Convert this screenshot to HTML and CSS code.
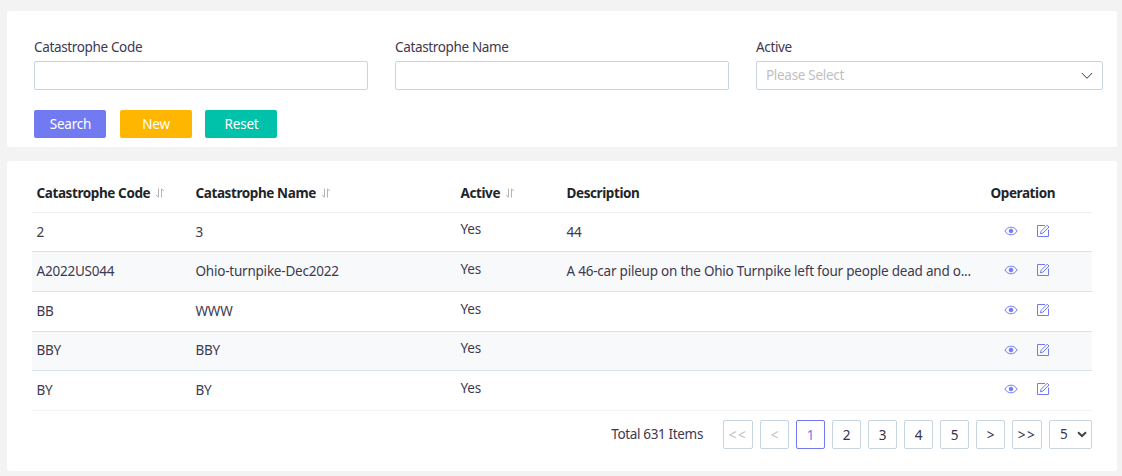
FILE: index.html
```html
<!DOCTYPE html>
<html lang="en">
<head>
    <meta charset="UTF-8">
    <meta name="viewport" content="width=device-width, initial-scale=1.0">
    <title>Catastrophe</title>
    <link rel="stylesheet" href="styles.css">
</head>
<body>
    <svg class="defs" width="0" height="0">
        <symbol id="sort" viewBox="0 0 10 10">
            <path d="M3.5 0.5V9M1 7L3.5 9.2M6.5 9.5V1M9 3L6.5 0.8"/>
        </symbol>
        <symbol id="eye" viewBox="0 0 14 14">
            <path d="M0.9 7C4 1.9 10 1.9 13.1 7C10 12.1 4 12.1 0.9 7Z"/>
            <circle cx="7" cy="7" r="1.8" class="fill"/>
        </symbol>
        <symbol id="edit" viewBox="0 0 14 14">
            <path d="M9 1.5H1.5V12.5H12.5V5.5"/>
            <path d="M4.4 9.8L5.1 7.3L11.2 1.2L13 3L6.9 9.1L4.4 9.8Z"/>
        </symbol>
    </svg>

    <div class="panel search-panel">
        <div class="fields">
            <div class="field">
                <label for="code">Catastrophe Code</label>
                <input type="text" id="code">
            </div>
            <div class="field">
                <label for="name">Catastrophe Name</label>
                <input type="text" id="name">
            </div>
            <div class="field">
                <label>Active</label>
                <div class="select">
                    <span>Please Select</span>
                    <svg width="12" height="8" viewBox="0 0 12 8"><path d="M0.8 1L6 6.3L11.2 1"/></svg>
                </div>
            </div>
        </div>
        <div class="buttons">
            <button class="btn search">Search</button>
            <button class="btn new">New</button>
            <button class="btn reset">Reset</button>
        </div>
    </div>

    <div class="panel result-panel">
        <table>
            <thead>
                <tr>
                    <th class="col-code">Catastrophe Code<svg class="sort"><use href="#sort"/></svg></th>
                    <th class="col-name">Catastrophe Name<svg class="sort"><use href="#sort"/></svg></th>
                    <th class="col-active">Active<svg class="sort"><use href="#sort"/></svg></th>
                    <th class="col-desc">Description</th>
                    <th class="col-op">Operation</th>
                </tr>
            </thead>
            <tbody>
                <tr class="short">
                    <td>2</td>
                    <td>3</td>
                    <td class="active">Yes</td>
                    <td>44</td>
                    <td class="op"><svg><use href="#eye"/></svg><svg><use href="#edit"/></svg></td>
                </tr>
                <tr>
                    <td>A2022US044</td>
                    <td>Ohio-turnpike-Dec2022</td>
                    <td class="active">Yes</td>
                    <td>A 46-car pileup on the Ohio Turnpike left four people dead and o...</td>
                    <td class="op"><svg><use href="#eye"/></svg><svg><use href="#edit"/></svg></td>
                </tr>
                <tr>
                    <td>BB</td>
                    <td>WWW</td>
                    <td class="active">Yes</td>
                    <td></td>
                    <td class="op"><svg><use href="#eye"/></svg><svg><use href="#edit"/></svg></td>
                </tr>
                <tr class="short">
                    <td>BBY</td>
                    <td>BBY</td>
                    <td class="active">Yes</td>
                    <td></td>
                    <td class="op"><svg><use href="#eye"/></svg><svg><use href="#edit"/></svg></td>
                </tr>
                <tr>
                    <td>BY</td>
                    <td>BY</td>
                    <td class="active">Yes</td>
                    <td></td>
                    <td class="op"><svg><use href="#eye"/></svg><svg><use href="#edit"/></svg></td>
                </tr>
            </tbody>
        </table>
        <div class="pager">
            <span class="total">Total 631 Items</span>
            <button class="page wide disabled">&lt;&lt;</button>
            <button class="page disabled">&lt;</button>
            <button class="page current">1</button>
            <button class="page">2</button>
            <button class="page">3</button>
            <button class="page">4</button>
            <button class="page">5</button>
            <button class="page">&gt;</button>
            <button class="page wide">&gt;&gt;</button>
            <div class="page-size">
                <span>5</span>
                <svg width="10" height="7" viewBox="0 0 10 7"><path d="M1 1.2L5 5L9 1.2"/></svg>
            </div>
        </div>
    </div>
</body>
</html>
```

FILE: styles.css
```css
* {
    box-sizing: border-box;
}
body {
    margin: 0;
    padding: 11px 5px 5px 7px;
    background: #f3f3f3;
    color: #3d3950;
    font-family: "Noto Sans", sans-serif;
    font-size: 13.5px;
    line-height: 20px;
    letter-spacing: -0.22px;
}
button {
    font: inherit;
    letter-spacing: inherit;
}
svg {
    fill: none;
}
.defs {
    display: block;
    height: 0;
}
.panel {
    background: #fff;
    border-radius: 3px;
}
.search-panel {
    height: 136px;
    margin-bottom: 14px;
    padding: 26px 14px 0 27px;
}
.fields {
    display: grid;
    grid-template-columns: 334px 334px 347px;
    gap: 27px;
}
.field label {
    display: block;
    height: 24px;
    letter-spacing: -0.35px;
}
.field input,
.select {
    display: flex;
    align-items: center;
    justify-content: space-between;
    width: 100%;
    height: 29px;
    padding: 0 9px;
    border: 1px solid #c7d5e0;
    border-radius: 2px;
    background: #fff;
    color: #bfbfbf;
}
.select span {
    margin-top: -1px;
    letter-spacing: -0.3px;
}
.select svg {
    stroke: #343050;
}
.buttons {
    display: flex;
    gap: 13.5px;
    margin-top: 20px;
}
.btn {
    width: 72px;
    height: 28px;
    padding: 0 0 0 1px;
    border: 0;
    border-radius: 2px;
    color: #fff;
}
.btn.search {
    background: #727af2;
}
.btn.new {
    background: #ffb600;
}
.btn.reset {
    background: #00c1a9;
}
.result-panel {
    height: 310px;
    padding: 13px 25px 0;
}
table {
    width: 1060px;
    table-layout: fixed;
    border-collapse: separate;
    border-spacing: 0;
}
th,
td {
    height: 40px;
    padding: 0 0 2px 4.5px;
    border-bottom: 1px solid #dbe1e6;
    text-align: left;
    white-space: nowrap;
}
th {
    height: 39px;
    padding-bottom: 0;
    border-color: #eeeff1;
    color: #212529;
    font-weight: 700;
    letter-spacing: -0.4px;
}
.short td {
    height: 39px;
}
tbody tr:first-child td {
    padding-bottom: 0;
}
.col-code {
    width: 159px;
}
.col-name {
    width: 265px;
}
.col-active {
    width: 106px;
}
.col-desc {
    width: 424px;
}
tbody tr:nth-child(even) {
    background: #f8f9fb;
}
tbody tr:last-child td {
    border-color: #f3f3f4;
}
.sort {
    width: 10px;
    height: 10px;
    margin-left: 5px;
    stroke: #b5b5b5;
}
tbody td.active,
tbody tr:first-child td.active {
    padding-bottom: 6px;
}
tbody td.op {
    padding-bottom: 3px;
    padding-left: 18px;
    font-size: 0;
}
tbody tr:first-child td.op {
    padding-bottom: 2px;
}
.op svg {
    width: 14px;
    height: 14px;
    margin-right: 18px;
    stroke: #727af2;
    vertical-align: middle;
}
.fill {
    fill: #727af2;
}
.pager {
    display: flex;
    align-items: center;
    justify-content: flex-end;
    gap: 7px;
    margin-top: 9px;
}
.total {
    margin-top: -1px;
    margin-right: 13px;
    letter-spacing: -0.35px;
}
.page {
    width: 29px;
    height: 29px;
    padding: 0;
    border: 1px solid #c7d5e0;
    border-radius: 2px;
    background: #fff;
    color: #343050;
}
.page.wide {
    width: 30px;
    letter-spacing: 1.5px;
}
.page.disabled {
    color: #bfbfbf;
}
.page.current {
    border-color: #727af2;
    color: #727af2;
}
.page-size {
    display: flex;
    align-items: center;
    justify-content: space-between;
    width: 43px;
    height: 29px;
    padding: 0 4px 1px 10px;
    border: 1px solid #c7d5e0;
    border-radius: 2px;
}
.page-size svg {
    stroke: #444;
    stroke-width: 2;
}
```
